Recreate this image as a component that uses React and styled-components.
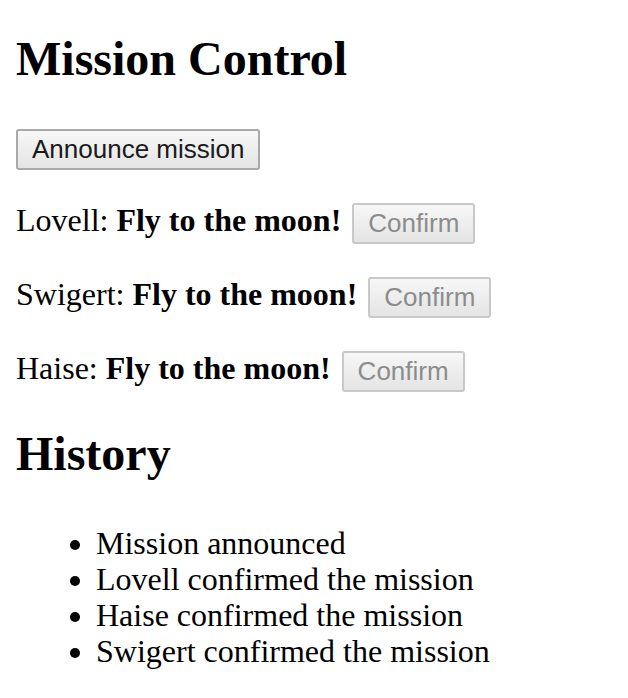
import React from 'react'
import styled, { createGlobalStyle } from 'styled-components'

const GlobalStyle = createGlobalStyle`
  body {
    margin: 0;
    padding: 16px;
    background: #ffffff;
    color: #000000;
    font-family: "Liberation Serif", "Times New Roman", serif;
    font-size: 32px;
  }
`

const Page = styled.div``

const Title = styled.h2`
  font-size: 48px;
  font-weight: 700;
  line-height: 55px;
  margin: ${({ first }) => (first ? '15px 0 35px' : '33px 0 44px')};
`

const Button = styled.button`
  font-family: "Liberation Sans", Arial, sans-serif;
  font-size: 26px;
  height: 41px;
  padding: 0 14px;
  margin-left: ${({ disabled }) => (disabled ? '3px' : '0')};
  border: 2px solid ${({ disabled }) => (disabled ? '#c8c8c8' : '#a9a9a9')};
  border-radius: 3px;
  background: linear-gradient(#f7f7f7, #e4e4e4);
  color: ${({ disabled }) => (disabled ? '#8c8c8c' : '#1a1a1a')};
  vertical-align: middle;
  cursor: ${({ disabled }) => (disabled ? 'default' : 'pointer')};
`

const Row = styled.p`
  margin: 0 0 24px;
  line-height: 50px;
`

const History = styled.ul`
  margin: 0;
  padding-left: 80px;
  line-height: 36px;
`

const crew = ['Lovell', 'Swigert', 'Haise']
const history = [
  'Mission announced',
  'Lovell confirmed the mission',
  'Haise confirmed the mission',
  'Swigert confirmed the mission',
]

function App() {
  return (
    <Page>
      <GlobalStyle />
      <Title first>Mission Control</Title>
      <Row>
        <Button>Announce mission</Button>
      </Row>
      {crew.map((name) => (
        <Row key={name}>
          {name}: <b>Fly to the moon!</b> <Button disabled>Confirm</Button>
        </Row>
      ))}
      <Title>History</Title>
      <History>
        {history.map((item) => (
          <li key={item}>{item}</li>
        ))}
      </History>
    </Page>
  )
}

export default App
